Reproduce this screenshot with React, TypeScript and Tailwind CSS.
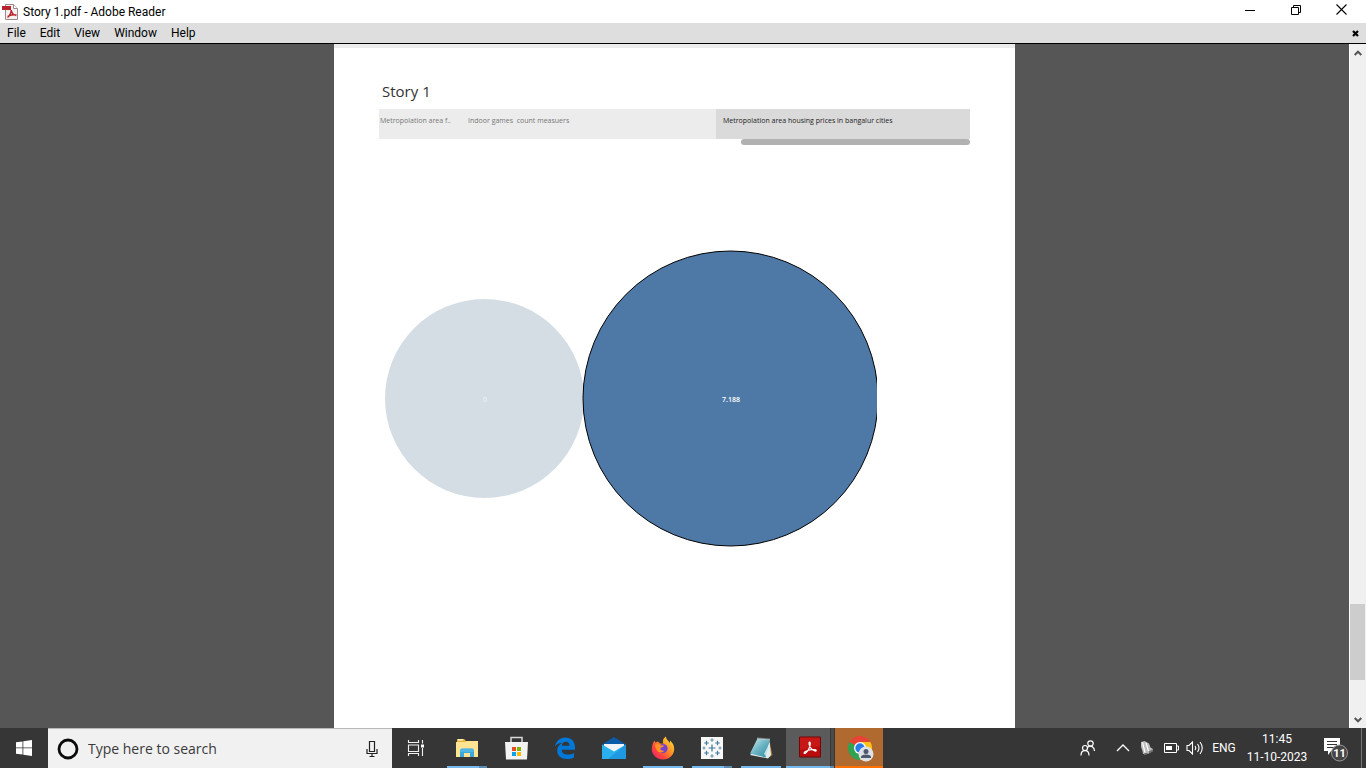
import React from "react";

const FONT = "font-['Open_Sans','Noto_Sans',sans-serif]";

function PdfIcon() {
  return (
    <svg width="16" height="16" viewBox="0 0 16 16" aria-hidden="true">
      <path d="M3.5.5h8l4 4v11h-12z" fill="#f6f1f1" stroke="#9b8a8a" />
      <path d="M11.5.5v4h4" fill="#fff" stroke="#9b8a8a" />
      <path d="M0 2h9v4H0z" fill="#b8232b" />
      <path d="M5.5 13.5c2-1.500 3.600-4.500 3.800-7.500M9.300 6c.2 3 2 5 5 5.500M5.500 12.500c2.500-1.800 5.500-2.300 9-1.500" fill="none" stroke="#b8232b" strokeWidth="1.500" />
    </svg>
  );
}

function TitleBar() {
  return (
    <header className="flex h-[23px] shrink-0 items-center bg-white pr-px pl-0.5 text-black">
      <PdfIcon />
      <h1 className="ml-[5px] grow font-['Roboto',sans-serif] text-xs">Story 1.pdf - Adobe Reader</h1>
      <button aria-label="Minimize" className="flex h-full w-[46px] items-center justify-center pb-1">
        <svg width="10" height="10" viewBox="0 0 10 10"><path d="M0 5.5h10" stroke="#000" /></svg>
      </button>
      <button aria-label="Restore" className="flex h-full w-[45px] items-center justify-center pb-1">
        <svg width="10" height="10" viewBox="0 0 10 10" fill="none" stroke="#000"><path d="M.5 2.500h7v7h-7zM2.500 2.500v-2h7v7h-2" /></svg>
      </button>
      <button aria-label="Close" className="flex h-full w-[47px] items-center justify-center pb-1">
        <svg width="11" height="11" viewBox="0 0 11 11"><path d="M.5.5l10 10M10.500.5l-10 10" stroke="#000" strokeWidth="1.100" /></svg>
      </button>
    </header>
  );
}

function MenuBar() {
  return (
    <nav className="flex h-[21px] shrink-0 items-center border-b border-black bg-[#dedede] pr-1.5 pl-[7px] text-xs text-black">
      <div className="flex grow gap-[14px] font-['Roboto',sans-serif]">
        {["File", "Edit", "View", "Window", "Help"].map((m) => (
          <button key={m}>{m}</button>
        ))}
      </div>
      <button aria-label="Close document" className="p-px">
        <svg width="7" height="7" viewBox="0 0 7 7"><path d="M1 1l5 5M6 1L1 6" stroke="#000" strokeWidth="2.200" /></svg>
      </button>
    </nav>
  );
}

function BubbleChart() {
  return (
    <svg width="493" height="298" viewBox="384 250 493 298" className="mt-[105px] ml-[5px] block" role="img" aria-label="Packed bubbles">
      <circle cx="484.500" cy="398.500" r="99.500" fill="#d5dde4" />
      <circle cx="730.500" cy="398.500" r="147.500" fill="#4e79a7" stroke="#000" />
      <g fontSize="7" textAnchor="middle" className="font-['Open_Sans',sans-serif]">
        <text x="485" y="402" fill="#f0f2f5">0</text>
        <text x="731" y="402" fill="#fff" fontWeight="600">7.188</text>
      </g>
    </svg>
  );
}

function Document() {
  return (
    <article className="mx-auto h-full w-[681px] border-t-4 border-[#ececec] bg-white pr-[45px] pl-[45px]">
      <h2 className="mt-8 ml-[3px] text-[15px] leading-[22px] text-[#333]">Story 1</h2>
      <div className="mt-[7px] flex h-[30px] items-start bg-[#ececec] text-[7px] leading-[10px] whitespace-nowrap text-[#777]">
        <button className="h-full w-[82px] pb-[6px] pl-px text-left">Metropolation area f..</button>
        <button className="h-full grow pb-[6px] pl-[7px] text-left whitespace-pre">Indoor games  count measuers</button>
        <button className="h-full w-[254px] bg-[#dadada] pb-[6px] pl-[7px] text-left text-[#222]">
          Metropolation area housing prices in bangalur cities
        </button>
      </div>
      <div className="ml-auto h-1.5 w-[229px] rounded-full bg-[#b1b1b1]" />
      <BubbleChart />
    </article>
  );
}

function ScrollBar() {
  return (
    <aside className="flex w-[17px] shrink-0 flex-col items-center border-l border-white bg-[#f0f0f0] pr-px">
      <button aria-label="Scroll up" className="flex h-[17px] items-center">
        <svg width="8" height="6" viewBox="0 0 8 6"><path d="M.7 5L4 1.700 7.300 5" fill="none" stroke="#555" strokeWidth="2" /></svg>
      </button>
      <div className="grow" />
      <div className="h-[76px] w-[15px] bg-[#cdcdcd]" />
      <div className="h-[31px]" />
      <button aria-label="Scroll down" className="flex h-[17px] items-center">
        <svg width="8" height="6" viewBox="0 0 8 6"><path d="M.7 1L4 4.300 7.300 1" fill="none" stroke="#555" strokeWidth="2" /></svg>
      </button>
    </aside>
  );
}

function FolderIcon() {
  return (
    <svg width="24" height="24" viewBox="0 0 24 24">
      <path d="M2 3h7l2 2h10v4H2z" fill="#e9b73c" />
      <path d="M3 3h5v1.500H3z" fill="#fff3c4" />
      <path d="M1 6h9l2-1h11v16H1z" fill="#ffe593" />
      <path d="M5 21v-6.500q0-2 2-2h10q2 0 2 2V21h-4v-4H9v4z" fill="#3ba8dc" />
      <path d="M5 16v-1.500q0-2 2-2h10q2 0 2 2V16z" fill="#63c3ec" opacity=".5" />
    </svg>
  );
}

function StoreIcon() {
  return (
    <svg width="24" height="24" viewBox="0 0 24 24">
      <path d="M7 6V1.500h11V6" fill="none" stroke="#d8d8d8" strokeWidth="1.500" />
      <path d="M1 6h23l-1 17.500H2z" fill="#f3f3f3" />
      <path d="M8 11h4v4H8z" fill="#e74c25" /><path d="M13 11h4v4h-4z" fill="#7db700" />
      <path d="M8 16h4v4H8z" fill="#0aa2ea" /><path d="M13 16h4v4h-4z" fill="#fdb800" />
    </svg>
  );
}

function EdgeIcon() {
  return (
    <svg width="24" height="24" viewBox="0 0 24 24">
      <path d="M2 10.500C3 5 7 1.500 12.300 1.500c6 0 9.700 4 9.700 10v2.300H8.700c.2 3.300 2.800 4.800 6.300 4.800 2.300 0 4.300-.6 6-1.600v4.400c-1.900 1-4.200 1.600-7 1.600-5.800 0-9.800-3.200-9.800-8.500 0-3.600 2-6.300 5-7.600C5.500 6.800 3.400 8.300 2 10.500zm6.800-.7h7.700c0-2.600-1.300-4-3.700-4-2.200 0-3.700 1.500-4 4z" fill="#0078d7" />
    </svg>
  );
}

function MailIcon() {
  return (
    <svg width="24" height="24" viewBox="0 0 24 24">
      <path d="M0 8.500L12 1l12 7.500V15H0z" fill="#0a5ba8" />
      <path d="M2 8h20v5l-10 5L2 13z" fill="#f1f4f8" />
      <path d="M0 8.500l12 7 12-7V23H0z" fill="#2ab0ed" />
      <path d="M24 8.500V23H6z" fill="#1689d8" opacity=".6" />
    </svg>
  );
}

function FirefoxIcon() {
  return (
    <svg width="24" height="24" viewBox="0 0 24 24">
      <defs>
        <linearGradient id="fox" x1="1" y1="0" x2="0" y2="1">
          <stop offset="0" stopColor="#fff04a" /><stop offset=".4" stopColor="#ff9722" />
          <stop offset=".7" stopColor="#ff433f" /><stop offset="1" stopColor="#e51c83" />
        </linearGradient>
      </defs>
      <path d="M3.500 4.500l.8 2L7 5.500l2 2 3.500.3C11 5 12.300 2.200 15 .5c0 3 2.500 4 4 6.500V4.500c3 2.500 4.300 5.500 4.200 8.500-.2 6-4.800 10.500-11 10.500S.8 19 .8 13C.8 9.500 2 6.500 3.500 4.500z" fill="url(#fox)" />
      <circle cx="12" cy="12.500" r="4.600" fill="#7541d5" />
      <path d="M4 9c2-1.500 4-1 5 .3l4 .2c-.5 1.500-2 2-3.500 2.300-.6 2.200 1.500 3.500 4 2.800-1.500 2.500-6 2.700-7.700-.3C5 13 4.300 11 4 9z" fill="#ff9125" />
    </svg>
  );
}

function Cross({ x, y, r, c }: { x: number; y: number; r: number; c: string }) {
  return <path d={`M${x - r} ${y}H${x + r}M${x} ${y - r}V${y + r}`} stroke={c} strokeWidth="1.200" />;
}

function TableauIcon() {
  return (
    <svg width="24" height="24" viewBox="0 0 24 24">
      <path d="M1 1h22v22H1z" fill="#f8f8f8" />
      <Cross x={12} y={12} r={3.500} c="#3e7699" />
      <Cross x={6.500} y={7} r={2.300} c="#467b9b" /><Cross x={17.500} y={7} r={2.300} c="#467b9b" />
      <Cross x={6.500} y={17} r={2.300} c="#467b9b" /><Cross x={17.500} y={17} r={2.300} c="#467b9b" />
      <Cross x={12} y={4} r={1.800} c="#6798b5" /><Cross x={12} y={20} r={1.800} c="#6798b5" />
      <Cross x={4} y={12} r={1.500} c="#6798b5" /><Cross x={20} y={12} r={1.500} c="#6798b5" />
    </svg>
  );
}

function NotepadIcon() {
  return (
    <svg width="24" height="24" viewBox="0 0 24 24">
      <defs><linearGradient id="note" x1="0" y1="0" x2="1" y2="1"><stop stopColor="#d3edf2" /><stop offset=".5" stopColor="#69b3c3" /><stop offset="1" stopColor="#2f889e" /></linearGradient></defs>
      <path d="M20 4l3.500 15-4 3z" fill="#a67634" />
      <path d="M20 3l2 16-3 3.500L1 19z" fill="#e3e7e7" />
      <path d="M8.500 2.500L21 3.500l-4.500 18L1 17.500z" fill="url(#note)" />
      <path d="M8.500 2.500L21 3.500" stroke="#c8d1d3" strokeWidth="2" strokeDasharray="1 1" />
      <path d="M15 18l6-12 .5 13-3 3z" fill="#dceff1" opacity=".8" />
    </svg>
  );
}

function ReaderIcon() {
  return (
    <svg width="24" height="24" viewBox="0 0 24 24">
      <path d="M1.500 2h21v20h-21z" fill="#b90c0c" stroke="#710707" />
      <path d="M2 2.500h20V11L2 15z" fill="#d02020" opacity=".6" />
      <path d="M6.200 18.300c-.8-1.100 3-3 7-3.600 2.600-.4 5.300-.2 5 1-.5 1-3.700-.4-5.500-2.800-1.700-2.400-2.200-5.500-1.200-5.700 1.300-.2.800 3.500-.5 6.300-1.400 3-3.900 5.800-4.800 4.800z" fill="none" stroke="#fff" strokeWidth="1.200" />
    </svg>
  );
}

function ChromeIcon() {
  return (
    <svg width="28" height="28" viewBox="0 0 28 28">
      <circle cx="13" cy="13" r="12" fill="#e94335" />
      <path d="M13 13L2.600 7A12 12 0 0 0 13 25l6-10z" fill="#31a350" />
      <path d="M13 25A12 12 0 0 0 23.400 7H13v6l4 2z" fill="#fbc116" />
      <circle cx="13" cy="13" r="6" fill="#fff" /><circle cx="13" cy="13" r="4.700" fill="#2c7bea" />
      <circle cx="19" cy="19" r="7.500" fill="#dfe2e5" />
      <circle cx="19" cy="16.500" r="2.500" fill="#4d596d" />
      <path d="M14 23v-1q0-2.500 5-2.500t5 2.500v1z" fill="#4d596d" />
    </svg>
  );
}

type TaskbarApp = { name: string; icon: React.ReactNode; bar: string };

const BLUE = "bg-[#76b9ed]";
const STACKED = "bg-[linear-gradient(to_right,#76b9ed_80%,#5b8bb0_80%)]";

const apps: TaskbarApp[] = [
  { name: "File Explorer", icon: <FolderIcon />, bar: STACKED },
  { name: "Microsoft Store", icon: <StoreIcon />, bar: "bg-transparent" },
  { name: "Edge", icon: <EdgeIcon />, bar: "bg-transparent" },
  { name: "Mail", icon: <MailIcon />, bar: "bg-transparent" },
  { name: "Firefox", icon: <FirefoxIcon />, bar: BLUE },
  { name: "Tableau", icon: <TableauIcon />, bar: STACKED },
  { name: "Notepad", icon: <NotepadIcon />, bar: BLUE },
];

function Taskbar() {
  return (
    <footer className="flex h-10 shrink-0 bg-[#363636] text-white">
      <button aria-label="Start" className="flex w-12 items-center justify-center">
        <svg width="16" height="16" viewBox="0 0 16 16" fill="#fff"><path d="M0 2.300l6.500-.9v6.100H0zM7.300 1.300L16 0v7.500H7.300zM0 8.300h6.500v6.300L0 13.700zM7.300 8.300H16V16l-8.700-1.200z" /></svg>
      </button>
      <label className="flex w-[344px] items-center border-t border-[#b8b8b8] bg-[#f1f1f1] pr-3 pl-[9px]">
        <svg width="22" height="22" viewBox="0 0 22 22" aria-hidden="true"><circle cx="11" cy="11" r="9" fill="none" stroke="#0b0b0b" strokeWidth="2.800" /></svg>
        <input
          aria-label="Search"
          placeholder="Type here to search"
          className="ml-[9px] min-w-0 grow bg-transparent text-sm text-black outline-none placeholder:text-[#3a3a3a]"
        />
        <svg width="16" height="18" viewBox="0 0 16 18" fill="none" stroke="#222" strokeWidth="1.200" aria-hidden="true">
          <path d="M5.500 1.500h5v10h-5zM3 9v4.500h10V9M8 13.500v3M5.500 16.500h5" />
        </svg>
      </label>
      <button aria-label="Task view" className="flex w-12 items-center justify-center">
        <svg width="18" height="16" viewBox="0 0 18 16" fill="none" stroke="#f0f0f0" strokeWidth="1.100">
          <path d="M1.500 0v2.500h10V0M1.500 5h10v6.500h-10zM1.500 16v-2.500h10V16M15.500 0v3.500M15.500 8v8" /><path d="M14 4.500h3v3h-3z" fill="#fff" stroke="none" />
        </svg>
      </button>
      <div className="flex pl-0.5">
        {apps.map((a) => (
          <button key={a.name} aria-label={a.name} className="flex w-[49px] flex-col items-center">
            <span className="flex grow items-center pt-0.5">{a.icon}</span>
            <span className={`h-0.5 w-10 ${a.bar}`} />
          </button>
        ))}
        <button aria-label="Adobe Reader" className="ml-px flex w-12 flex-col bg-[linear-gradient(to_right,#5b5b5b_44px,#383838_44px,#383838_45px,#4a4a4a_45px)]">
          <span className="flex w-full grow items-center justify-center">
            <ReaderIcon />
          </span>
          <span className="h-0.5 w-full bg-[linear-gradient(to_right,#76b9ed_44px,#5b8bb0_44px)]" />
        </button>
        <button aria-label="Chrome" className="ml-px flex w-12 flex-col bg-[#b06a30]">
          <span className="flex w-full grow items-center justify-center pt-1 pl-1"><ChromeIcon /></span>
          <span className="h-0.5 w-full bg-[#ff7000]" />
        </button>
      </div>
      <div className="ml-auto flex items-center font-['Roboto',sans-serif] text-xs">
        <button aria-label="People">
          <svg width="16" height="16" viewBox="0 0 16 16" fill="none" stroke="#fff" strokeWidth="1.200">
            <circle cx="10.500" cy="3.500" r="2.700" /><circle cx="5" cy="8" r="2.500" /><path d="M1 15.500c0-6.500 8-6.500 8 0M7.500 7.500c3-3 7-.5 7 3.500" />
          </svg>
        </button>
        <button aria-label="Show hidden icons" className="ml-5">
          <svg width="14" height="8" viewBox="0 0 14 8"><path d="M1 7l6-6 6 6" fill="none" stroke="#fff" strokeWidth="1.300" /></svg>
        </button>
        <button aria-label="Notifier" className="ml-2.5">
          <svg width="14" height="16" viewBox="0 0 14 16">
            <path d="M1 2l3.500-1L9 3.500l1.500 4L13 9v2l-4 2.500L3 14l-.5-3L1 7z" fill="#bdbdbd" />
            <path d="M2.500 2.500l2.500 10M6 3l2.500 8" stroke="#fff" strokeWidth="1.200" />
            <path d="M4 14.500l3-1M9 12.500l4-2.500" stroke="#6d6d6d" strokeWidth="1.500" />
          </svg>
        </button>
        <button aria-label="Battery" className="ml-2.5">
          <svg width="16" height="10" viewBox="0 0 16 10"><path d="M.5.5h12v9H.5z" fill="none" stroke="#fff" /><path d="M2 3h6v4H2z" fill="#fff" /><path d="M13 3h1.500v4H13" fill="none" stroke="#fff" /></svg>
        </button>
        <button aria-label="Volume" className="ml-1.5">
          <svg width="18" height="14" viewBox="0 0 18 14" fill="none" stroke="#fff" strokeWidth="1.100"><path d="M1 4.500h2l3.500-3.500v12L3 9.500H1zM9 5q1.500 2 0 4M11.500 3q3 4 0 8M14 1q4.500 6 0 12" /></svg>
        </button>
        <button className="ml-2 w-6">ENG</button>
        <button className="ml-2.5 w-[62px] text-center leading-[18px]">
          <span className="block">11:45</span>
          <span className="block whitespace-nowrap">11-10-2023</span>
        </button>
        <button aria-label="Notifications, 11 new" className="ml-4 pt-1">
          <svg width="25" height="24" viewBox="0 0 25 24">
            <path d="M0 0h16v13H7l-3 4v-4H0z" fill="#fff" /><path d="M3 3.500h10M3 6.500h10M3 9.500h7" stroke="#363636" />
            <circle cx="15.500" cy="15" r="8" fill="#464646" stroke="#999" />
            <text x="15.500" y="19" textAnchor="middle" fontSize="11" fontWeight="700" fill="#fff">11</text>
          </svg>
        </button>
        <div className="ml-3 h-10 w-[5px] border-l border-[#777]" />
      </div>
    </footer>
  );
}

export default function App() {
  return (
    <div className={`flex h-screen flex-col overflow-hidden ${FONT}`}>
      <TitleBar />
      <MenuBar />
      <div className="flex min-h-0 grow bg-[#565656]">
        <main className="min-w-0 grow overflow-hidden"><Document /></main>
        <ScrollBar />
      </div>
      <Taskbar />
    </div>
  );
}
